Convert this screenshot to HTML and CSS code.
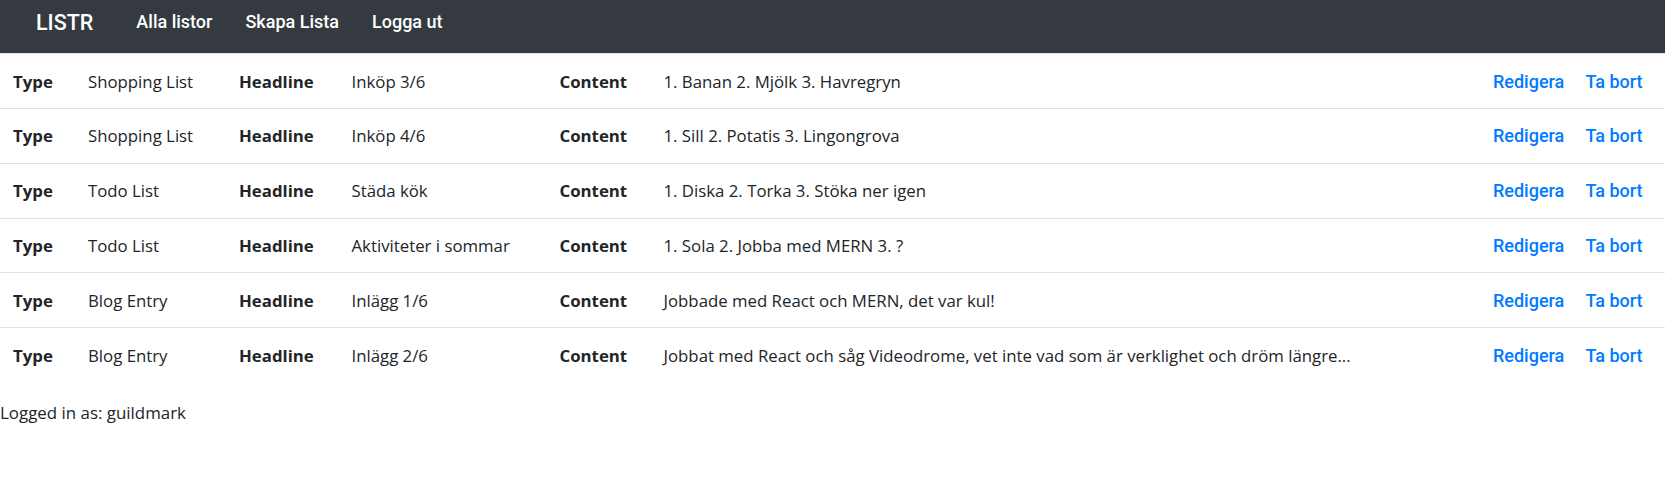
FILE: index.html
```html
<!DOCTYPE html>
<html lang="sv">
<head>
<meta charset="utf-8">
<title>LISTR</title>
<link rel="stylesheet" href="styles.css">
</head>
<body>
<nav class="navbar">
  <a class="brand" href="#">LISTR</a>
  <ul class="nav-links">
    <li><a href="#">Alla listor</a></li>
    <li><a href="#">Skapa Lista</a></li>
    <li><a href="#">Logga ut</a></li>
  </ul>
</nav>
<table class="lists">
  <colgroup>
    <col class="c-type-l"><col class="c-type-v"><col class="c-head-l"><col class="c-head-v">
    <col class="c-cont-l"><col class="c-cont-v"><col class="c-edit"><col class="c-del">
  </colgroup>
  <tbody>
    <tr><th>Type</th><td>Shopping List</td><th>Headline</th><td>Inköp 3/6</td><th>Content</th><td>1. Banan 2. Mjölk 3. Havregryn</td><td class="act"><a href="#">Redigera</a></td><td class="act"><a href="#">Ta bort</a></td></tr>
    <tr><th>Type</th><td>Shopping List</td><th>Headline</th><td>Inköp 4/6</td><th>Content</th><td>1. Sill 2. Potatis 3. Lingongrova</td><td class="act"><a href="#">Redigera</a></td><td class="act"><a href="#">Ta bort</a></td></tr>
    <tr><th>Type</th><td>Todo List</td><th>Headline</th><td>Städa kök</td><th>Content</th><td>1. Diska 2. Torka 3. Stöka ner igen</td><td class="act"><a href="#">Redigera</a></td><td class="act"><a href="#">Ta bort</a></td></tr>
    <tr><th>Type</th><td>Todo List</td><th>Headline</th><td>Aktiviteter i sommar</td><th>Content</th><td>1. Sola 2. Jobba med MERN 3. ?</td><td class="act"><a href="#">Redigera</a></td><td class="act"><a href="#">Ta bort</a></td></tr>
    <tr><th>Type</th><td>Blog Entry</td><th>Headline</th><td>Inlägg 1/6</td><th>Content</th><td>Jobbade med React och MERN, det var kul!</td><td class="act"><a href="#">Redigera</a></td><td class="act"><a href="#">Ta bort</a></td></tr>
    <tr><th>Type</th><td>Blog Entry</td><th>Headline</th><td>Inlägg 2/6</td><th>Content</th><td>Jobbat med React och såg Videodrome, vet inte vad som är verklighet och dröm längre...</td><td class="act"><a href="#">Redigera</a></td><td class="act"><a href="#">Ta bort</a></td></tr>
  </tbody>
</table>
<p class="status">Logged in as: guildmark</p>
</body>
</html>
```
FILE: styles.css
```css
html, body {
  margin: 0;
  padding: 0;
  background: #fff;
}
body {
  font-family: "Open Sans", "Noto Sans", sans-serif;
  font-size: 16.8px;
  color: #212529;
}
.navbar {
  display: flex;
  align-items: flex-start;
  box-sizing: border-box;
  height: 53px;
  padding: 10px 0 0 36px;
  background: #343a40;
  font-family: Roboto, "Liberation Sans", sans-serif;
}
.brand {
  color: #fff;
  text-decoration: none;
  font-size: 21.5px;
  line-height: 24px;
  font-weight: 500;
  margin: 0.5px 43px 0 0;
}
.nav-links {
  display: flex;
  gap: 33px;
  list-style: none;
  margin: 0;
  padding: 0;
}
.nav-links a {
  color: #fff;
  text-decoration: none;
  font-size: 18px;
  line-height: 24px;
  font-weight: 500;
}
.lists {
  width: 100%;
  border-collapse: collapse;
  table-layout: fixed;
  margin-bottom: 18px;
}
.c-type-l { width: 75px; }
.c-type-v { width: 151px; }
.c-head-l { width: 112.5px; }
.c-head-v { width: 208px; }
.c-cont-l { width: 104px; }
.c-cont-v { width: 829.5px; }
.c-edit { width: 92.5px; }
.c-del { width: 92.5px; }
.lists th, .lists td {
  text-align: left;
  vertical-align: top;
  padding: 15.5px 13px 13.5px;
  line-height: 24.85px;
  border-top: 1px solid #dee2e6;
  white-space: nowrap;
}
.lists th {
  font-weight: 700;
}
.lists .act a {
  color: #007bff;
  text-decoration: none;
  font-family: Roboto, "Liberation Sans", sans-serif;
  font-weight: 500;
  font-size: 18px;
}
.status {
  margin: 0;
  font-size: 16.9px;
  line-height: 25px;
}
```
